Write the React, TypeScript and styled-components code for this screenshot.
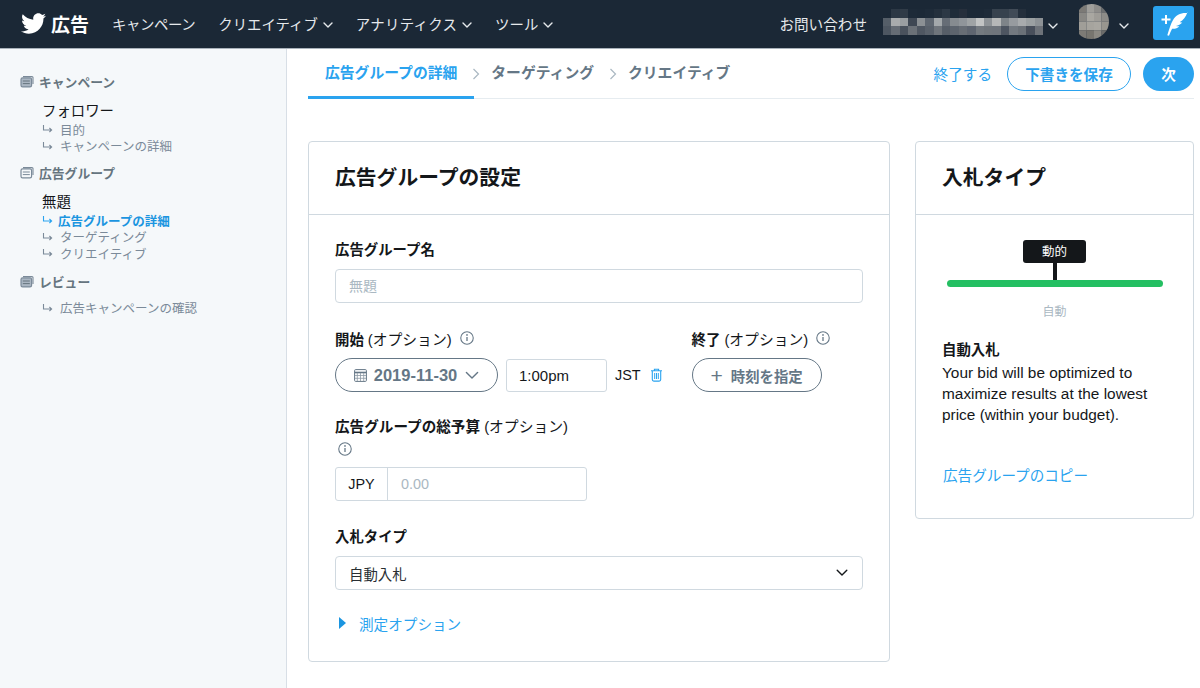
import styled, { createGlobalStyle } from "styled-components";
import { FaTwitter } from "react-icons/fa";

const GlobalStyle = createGlobalStyle`
  * {
    box-sizing: border-box;
  }

  html,
  body {
    margin: 0;
    height: 100%;
    background: #fff;
  }

  body {
    font-family: "Liberation Sans", "Noto Sans CJK JP", sans-serif;
    color: #14171a;
    overflow: hidden;
  }
`;

const mosaicRows = [
  ["#1b2836", "#2c3845", "#303b47", "#1d2a38", "#1c2937", "#1e2b39", "#24303d", "#2c3845", "#1f2c39", "#262f3c", "#1c2937", "#1c2937", "#1e2b39", "#37424e", "#37424e", "#414b57", "#242f3c", "#1b2836", "#1b2836"],
  ["#555e68", "#a8abad", "#9a9ea1", "#3e4753", "#8b9094", "#5f6771", "#a3a8ab", "#666d76", "#868b90", "#90959a", "#9fa3a5", "#c2c4c4", "#8e9397", "#b6b8b8", "#7e8489", "#979b9f", "#a8abad", "#9ba0a2", "#8d9296"],
  ["#4d5661", "#656c75", "#4a525d", "#6b7178", "#4f5762", "#59616b", "#6f757c", "#565e68", "#5d646e", "#676d75", "#5e6570", "#747a80", "#70767c", "#6f757c", "#4d5561", "#737980", "#6b7178", "#484f5b", "#6d7279"],
];

const avatarRows = [
  ["#7c7a76", "#a09f9b", "#8e8d8a", "#6d6f70"],
  ["#898884", "#a9a7a1", "#9e9c97", "#8d8c88"],
  ["#a09e98", "#a6a49e", "#a9a7a1", "#98968f"],
  ["#7d7b76", "#77756f", "#8b8983", "#6c6c6a"],
];

function Chevron({ size = 10, color = "currentColor" }: { size?: number; color?: string }) {
  return (
    <svg width={size} height={size * 0.6} viewBox="0 0 10 6" fill="none">
      <path d="M1 1l4 4 4-4" stroke={color} strokeWidth={14 / size} strokeLinecap="round" strokeLinejoin="round" />
    </svg>
  );
}

function StackIcon({ filled }: { filled?: boolean }) {
  return (
    <svg width="14" height="13" viewBox="0 0 14 13" fill="none">
      <path d="M3 1.6h9a1 1 0 0 1 1 1v6.5" stroke="#7b8a99" strokeWidth="1.1" />
      <rect x="1" y="2.9" width="10.6" height="9" rx="1.6" stroke="#7b8a99" strokeWidth="1.2" fill={filled ? "#aab6c2" : "none"} />
      <path d="M2.8 6h7M2.8 8.6h7" stroke={filled ? "#66757f" : "#7b8a99"} strokeWidth="1" />
    </svg>
  );
}

function SubArrow({ active }: { active?: boolean }) {
  const c = active ? "#2aa3ef" : "#7b8a99";
  return (
    <svg width="11" height="10" viewBox="0 0 11 10" fill="none">
      <path d="M1.5 1v5h8M7.4 4l2.2 2-2.2 2" stroke={c} strokeWidth="1.1" />
    </svg>
  );
}

function InfoIcon() {
  return (
    <svg width="14" height="14" viewBox="0 0 13 13" fill="none">
      <circle cx="6.5" cy="6.5" r="5.8" stroke="#657786" strokeWidth="1" />
      <path d="M6.5 5.6v3.8" stroke="#657786" strokeWidth="1.2" />
      <circle cx="6.5" cy="3.7" r=".8" fill="#657786" />
    </svg>
  );
}

function CalendarIcon() {
  return (
    <svg width="13" height="13" viewBox="0 0 13 13" fill="none">
      <rect x=".6" y=".6" width="11.8" height="11.8" rx="1" stroke="#657786" strokeWidth="1" />
      <path d="M.6 3.5h11.8" stroke="#657786" strokeWidth="1.6" />
      <path d="M3.3 4v8M6.5 4v8M9.7 4v8M1 6.5h11M1 9.3h11" stroke="#8d99a5" strokeWidth=".8" />
    </svg>
  );
}

function TrashIcon() {
  return (
    <svg width="13" height="14" viewBox="0 0 13 14" fill="none">
      <path d="M1 2.8h11M4.4 2.6V1.2h4.2v1.4M2.3 3v8.6a1.5 1.5 0 0 0 1.5 1.5h5.4a1.5 1.5 0 0 0 1.5-1.5V3" stroke="#2aa3ef" strokeWidth="1.1" />
      <path d="M4.7 5v6M6.5 5v6M8.3 5v6" stroke="#2aa3ef" strokeWidth="1" />
    </svg>
  );
}

function QuillIcon() {
  return (
    <svg width="32" height="28" viewBox="0 0 32 28" fill="none">
      <path d="M8 6v9M3.500 10.500h9" stroke="#fff" strokeWidth="2" />
      <path
        transform="translate(-.5 1.500)"
        d="M30 2.600c-6.400-.6-11.600 1.800-14.600 7.100-2 3.400-3.500 8.300-5.600 15.100l1.700.5c1-2.700 2-5 3.100-7 2.600.3 5.400-.5 7.200-2.600-1.300.1-2.500 0-3.300-.3 2.300-.2 4.700-1.200 6.300-3.300-1-.1-1.800-.3-2.400-.6 3.100-1.500 6-5 7.600-9.900z"
        fill="#fff"
      />
    </svg>
  );
}

function Mosaic() {
  return (
    <MosaicSvg width="160" height="26" viewBox="0 0 19 3" preserveAspectRatio="none" shapeRendering="crispEdges">
      {mosaicRows.map((row, y) =>
        row.map((c, x) => <rect key={`${x}-${y}`} x={x} y={y} width="1" height="1" fill={c} />),
      )}
    </MosaicSvg>
  );
}

function Avatar() {
  return (
    <svg width="30" height="35" viewBox="0 0 30 35">
      <defs>
        <clipPath id="avatarClip">
          <path d="M0 6Q4 0 12.500 0A17.500 17.500 0 0 1 12.500 35Q4 35 0 30z" />
        </clipPath>
      </defs>
      <g clipPath="url(#avatarClip)">
        {avatarRows.map((row, y) =>
          row.map((c, x) => <rect key={`${x}-${y}`} x={x * 7.5} y={y * 8.75} width="7.6" height="8.85" fill={c} />),
        )}
      </g>
    </svg>
  );
}

function StepSeparator() {
  return (
    <StepArrow>
      <svg width="8" height="12" viewBox="0 0 7 12" fill="none">
        <path d="M1 1l5 5-5 5" stroke="#aab8c2" strokeWidth="1.2" />
      </svg>
    </StepArrow>
  );
}

export default function App() {
  return (
    <>
      <GlobalStyle />
      <TopBar>
        <Brand>
          <FaTwitter size={25} color="#fff" />
          <BrandName>広告</BrandName>
        </Brand>
        <NavLinks>
          <NavLink $track={-0.4}>キャンペーン</NavLink>
          <NavLink>
            クリエイティブ <Chevron />
          </NavLink>
          <NavLink $track={0.3}>
            アナリティクス <Chevron />
          </NavLink>
          <NavLink>
            ツール <Chevron />
          </NavLink>
        </NavLinks>
        <TopRight>
          <ContactLink>お問い合わせ</ContactLink>
          <Mosaic />
          <ChevronSlot>
            <Chevron />
          </ChevronSlot>
          <AvatarSlot>
            <Avatar />
          </AvatarSlot>
          <ChevronSlot>
            <Chevron />
          </ChevronSlot>
          <ComposeButton aria-label="compose">
            <QuillIcon />
          </ComposeButton>
        </TopRight>
      </TopBar>
      <Page>
        <Sidebar>
          <SideHeading>
            <StackIcon filled /> キャンペーン
          </SideHeading>
          <SideTitle>フォロワー</SideTitle>
          <SideItem>
            <SubArrow /> 目的
          </SideItem>
          <SideItem>
            <SubArrow /> キャンペーンの詳細
          </SideItem>
          <SideHeading $gap={8}>
            <StackIcon /> 広告グループ
          </SideHeading>
          <SideTitle>無題</SideTitle>
          <SideItem $active>
            <SubArrow active /> 広告グループの詳細
          </SideItem>
          <SideItem>
            <SubArrow /> ターゲティング
          </SideItem>
          <SideItem>
            <SubArrow /> クリエイティブ
          </SideItem>
          <SideHeading $gap={10}>
            <StackIcon filled /> レビュー
          </SideHeading>
          <SideItem $first>
            <SubArrow /> 広告キャンペーンの確認
          </SideItem>
        </Sidebar>
        <Main>
          <Steps>
            <Step $active>広告グループの詳細</Step>
            <StepSeparator />
            <Step>ターゲティング</Step>
            <StepSeparator />
            <Step>クリエイティブ</Step>
            <StepActions>
              <QuitLink>終了する</QuitLink>
              <OutlineButton>下書きを保存</OutlineButton>
              <NextButton>次</NextButton>
            </StepActions>
          </Steps>
          <Columns>
            <FormCard>
              <CardHeader>広告グループの設定</CardHeader>
              <FormBody>
                <Field>
                  <Label>広告グループ名</Label>
                  <TextInput readOnly placeholder="無題" />
                </Field>
                <ScheduleRow>
                  <div>
                    <Label>
                      開始 <Optional>(オプション)</Optional>
                      <InfoIcon />
                    </Label>
                    <ScheduleControls>
                      <DatePill>
                        <CalendarIcon />
                        <span>2019-11-30</span>
                        <Chevron size={14} />
                      </DatePill>
                      <TimeInput readOnly value="1:00pm" />
                      <Zone>JST</Zone>
                      <TrashIcon />
                    </ScheduleControls>
                  </div>
                  <div>
                    <Label>
                      終了 <Optional>(オプション)</Optional>
                      <InfoIcon />
                    </Label>
                    <ScheduleControls>
                      <TimePill>
                        <PlusSign>+</PlusSign> 時刻を指定
                      </TimePill>
                    </ScheduleControls>
                  </div>
                </ScheduleRow>
                <BudgetField>
                  <BudgetLabel>
                    広告グループの総予算 <Optional>(オプション)</Optional>
                    <InfoLine>
                      <InfoIcon />
                    </InfoLine>
                  </BudgetLabel>
                  <MoneyInput>
                    <Currency>JPY</Currency>
                    <MoneyValue>0.00</MoneyValue>
                  </MoneyInput>
                </BudgetField>
                <BidField>
                  <Label>入札タイプ</Label>
                  <SelectBox>
                    自動入札
                    <Chevron size={12} color="#14171a" />
                  </SelectBox>
                </BidField>
                <Disclosure>
                  <Caret />
                  測定オプション
                </Disclosure>
              </FormBody>
            </FormCard>
            <BidCard>
              <CardHeader>入札タイプ</CardHeader>
              <BidBody>
                <Gauge>
                  <GaugeTag>動的</GaugeTag>
                  <GaugeStem />
                  <GaugeBar />
                  <GaugeCaption>自動</GaugeCaption>
                </Gauge>
                <BidTitle>自動入札</BidTitle>
                <BidText>Your bid will be optimized to maximize results at the lowest price (within your budget).</BidText>
                <CopyLink>広告グループのコピー</CopyLink>
              </BidBody>
            </BidCard>
          </Columns>
        </Main>
      </Page>
    </>
  );
}

const TopBar = styled.header`
  height: 49px;
  background: #1b2836;
  border-bottom: 1px solid #a9b2bb;
  display: flex;
  align-items: center;
  padding: 0 6px 2px 21px;
  color: #e6e9ec;
`;

const Brand = styled.div`
  display: flex;
  align-items: center;
  gap: 5px;
  margin-right: 23px;
`;

const BrandName = styled.span`
  font-size: 19px;
  font-weight: 700;
  color: #fff;
`;

const NavLinks = styled.nav`
  display: flex;
  align-items: center;
  gap: 23px;
`;

const NavLink = styled.span<{ $track?: number }>`
  font-size: 14.4px;
  letter-spacing: ${(p) => p.$track ?? 0}px;
  display: flex;
  align-items: center;
  gap: 5px;
  white-space: nowrap;

  svg {
    margin-top: 3px;
  }
`;

const TopRight = styled.div`
  margin-left: auto;
  display: flex;
  align-items: center;
`;

const ContactLink = styled.span`
  font-size: 14.6px;
  margin-right: 16px;
`;

const MosaicSvg = styled.svg`
  display: block;
  margin-top: -2px;
`;

const ChevronSlot = styled.span`
  display: flex;
  margin-left: 5px;
  margin-top: 5px;
`;

const AvatarSlot = styled.span`
  display: flex;
  margin-left: 21px;
  margin-right: 5px;
  margin-top: -3px;
`;

const ComposeButton = styled.button`
  width: 41px;
  height: 34px;
  margin-left: 24px;
  padding: 0;
  border: none;
  border-radius: 3px;
  background: #2aa3ef;
  display: flex;
  align-items: center;
  justify-content: center;
`;

const Page = styled.div`
  display: flex;
  height: 639px;
`;

const Sidebar = styled.aside`
  width: 287px;
  flex: none;
  background: #f5f8fa;
  border-right: 1px solid #d8dfe6;
  padding: 22px 0 0 20px;
`;

const SideHeading = styled.div<{ $gap?: number }>`
  display: flex;
  align-items: center;
  gap: 5px;
  height: 20px;
  margin-top: ${(p) => p.$gap ?? 0}px;
  font-size: 12.8px;
  font-weight: 700;
  color: #66757f;
`;

const SideTitle = styled.div`
  margin: 11px 0 0 22px;
  height: 19px;
  line-height: 19px;
  font-size: 14.4px;
  color: #14171a;
`;

const SideItem = styled.div<{ $active?: boolean; $first?: boolean }>`
  display: flex;
  align-items: center;
  gap: ${(p) => (p.$active ? "5px" : "7px")};
  margin-left: 22px;
  margin-top: ${(p) => (p.$first ? "8px" : "0")};
  height: 16.5px;
  font-size: 12.5px;
  font-weight: ${(p) => (p.$active ? 700 : 400)};
  color: ${(p) => (p.$active ? "#1b95e0" : "#7b8a99")};
`;

const Main = styled.main`
  flex: 1;
  padding: 0 6px 0 21px;
`;

const Steps = styled.div`
  height: 50px;
  display: flex;
  align-items: center;
  border-bottom: 1px solid #e6ecf0;
`;

const Step = styled.div<{ $active?: boolean }>`
  height: 50px;
  line-height: 49px;
  padding: 0 17px;
  font-size: 14.8px;
  font-weight: 700;
  white-space: nowrap;
  color: ${(p) => (p.$active ? "#2aa3ef" : "#657786")};
  border-bottom: ${(p) => (p.$active ? "3px solid #2aa3ef" : "none")};
  margin-bottom: ${(p) => (p.$active ? "-1px" : "0")};
`;

const StepArrow = styled.span`
  display: flex;
  width: 0;
  overflow: visible;

  svg {
    flex: none;
    margin-left: -2px;
  }
`;

const StepActions = styled.div`
  margin-left: auto;
  display: flex;
  align-items: center;
`;

const QuitLink = styled.span`
  font-size: 14.6px;
  color: #2aa3ef;
  margin-right: 15px;
`;

const OutlineButton = styled.button`
  height: 34px;
  width: 124px;
  border-radius: 17px;
  border: 1px solid #2aa3ef;
  background: #fff;
  color: #2aa3ef;
  font: 700 14.6px "Liberation Sans", "Noto Sans CJK JP", sans-serif;
  padding: 0;
`;

const NextButton = styled.button`
  height: 34px;
  width: 51px;
  margin-left: 12px;
  border-radius: 17px;
  border: none;
  background: #2aa3ef;
  color: #fff;
  font: 700 14.6px "Liberation Sans", "Noto Sans CJK JP", sans-serif;
  padding: 0;
`;

const Columns = styled.div`
  display: flex;
  align-items: flex-start;
  gap: 25px;
  margin-top: 42px;
`;

const Card = styled.section`
  background: #fff;
  border: 1px solid #d0d9e0;
  border-radius: 4px;
`;

const FormCard = styled(Card)`
  width: 582px;
  height: 521px;
`;

const BidCard = styled(Card)`
  width: 279px;
  height: 378px;
`;

const CardHeader = styled.h2`
  margin: 0;
  height: 73px;
  line-height: 72px;
  padding-left: 26px;
  font-size: 20.8px;
  font-weight: 700;
  color: #14171a;
  border-bottom: 1px solid #d0d9e0;
`;

const FormBody = styled.div`
  padding: 22px 26px 0;
`;

const Field = styled.div`
  display: flex;
  flex-direction: column;
`;

const Label = styled.label`
  display: flex;
  align-items: center;
  height: 22px;
  margin-bottom: 10px;
  font-size: 14.4px;
  font-weight: 700;
  color: #14171a;
  gap: 4px;
  white-space: nowrap;

  svg {
    margin-left: 4px;
  }
`;

const Optional = styled.span`
  font-size: 14.8px;
  font-weight: 400;
  color: #14171a;
`;

const TextInput = styled.input`
  width: 100%;
  height: 34px;
  padding: 0 13px;
  border: 1px solid #d0d9e0;
  border-radius: 4px;
  font: 14px "Liberation Sans", "Noto Sans CJK JP", sans-serif;
  outline: none;

  &::placeholder {
    color: #aab8c2;
  }
`;

const ScheduleRow = styled.div`
  display: flex;
  gap: 29px;
  margin-top: 24px;
`;

const ScheduleControls = styled.div`
  display: flex;
  align-items: center;
  height: 34px;
  margin-top: -1px;
`;

const Pill = styled.button`
  height: 34px;
  border: 1px solid #657786;
  border-radius: 17px;
  background: #fff;
  color: #657786;
  font: 700 14.4px "Liberation Sans", "Noto Sans CJK JP", sans-serif;
  display: flex;
  align-items: center;
  justify-content: center;
  padding: 0;
`;

const DatePill = styled(Pill)`
  width: 163px;
  gap: 7px;
  font-size: 16.5px;

  svg:last-child {
    margin-left: 1px;
  }
`;

const TimePill = styled(Pill)`
  width: 130px;
  gap: 8px;
`;

const PlusSign = styled.span`
  font-size: 21px;
  font-weight: 400;
  line-height: 1;
`;

const TimeInput = styled.input`
  width: 101px;
  height: 33px;
  margin-left: 8px;
  padding: 0 12px;
  border: 1px solid #d0d9e0;
  border-radius: 3px;
  color: #14171a;
  font: 15px "Liberation Sans", "Noto Sans CJK JP", sans-serif;
  outline: none;
`;

const Zone = styled.span`
  margin: 0 9px 0 8px;
  font-size: 14.4px;
  color: #14171a;
`;

const BudgetField = styled.div`
  margin-top: 25px;
`;

const BudgetLabel = styled.div`
  width: 260px;
  font-size: 14.6px;
  font-weight: 700;
  line-height: 21px;
  color: #14171a;
  white-space: nowrap;
`;

const InfoLine = styled.div`
  height: 21px;
  display: flex;
  align-items: center;
  padding-left: 3px;
`;

const MoneyInput = styled.div`
  display: flex;
  align-items: stretch;
  width: 252px;
  height: 34px;
  margin-top: 8px;
  border: 1px solid #d0d9e0;
  border-radius: 3px;
  font-size: 14.4px;
  line-height: 32px;
`;

const Currency = styled.span`
  width: 52px;
  text-align: center;
  color: #14171a;
  border-right: 1px solid #d0d9e0;
`;

const MoneyValue = styled.span`
  padding-left: 13px;
  color: #aab8c2;
`;

const BidField = styled(Field)`
  margin-top: 23px;
`;

const SelectBox = styled.div`
  height: 34px;
  padding: 0 14px 0 13px;
  display: flex;
  align-items: center;
  justify-content: space-between;
  border: 1px solid #d0d9e0;
  border-radius: 4px;
  font-size: 14.4px;
  color: #292f33;
`;

const Disclosure = styled.div`
  display: flex;
  align-items: center;
  margin-top: 23px;
  padding-left: 4px;
  height: 20px;
  font-size: 14.6px;
  color: #2aa3ef;
`;

const Caret = styled.span`
  width: 0;
  height: 0;
  margin-right: 13px;
  border-left: 7px solid #1b95e0;
  border-top: 6px solid transparent;
  border-bottom: 6px solid transparent;
`;

const BidBody = styled.div`
  padding: 25px 26px 0;
`;

const Gauge = styled.div`
  display: flex;
  flex-direction: column;
  align-items: center;
`;

const GaugeTag = styled.div`
  width: 63px;
  height: 23px;
  border-radius: 3px;
  background: #14171a;
  color: #fff;
  font-size: 12.5px;
  line-height: 25px;
  text-align: center;
`;

const GaugeStem = styled.div`
  width: 4px;
  height: 17px;
  background: #14171a;
`;

const GaugeBar = styled.div`
  width: 216px;
  height: 7px;
  border-radius: 4px;
  background: #24bf62;
`;

const GaugeCaption = styled.div`
  margin-top: 16px;
  font-size: 12px;
  line-height: 18px;
  color: #aab8c2;
`;

const BidTitle = styled.div`
  margin-top: 19px;
  font-size: 14.4px;
  font-weight: 700;
  line-height: 21px;
`;

const BidText = styled.p`
  margin: 1px 0 0;
  font-size: 15.4px;
  line-height: 21px;
  color: #14171a;
`;

const CopyLink = styled.div`
  margin: 41px 0 0 1px;
  font-size: 14.6px;
  line-height: 21px;
  color: #2aa3ef;
`;
